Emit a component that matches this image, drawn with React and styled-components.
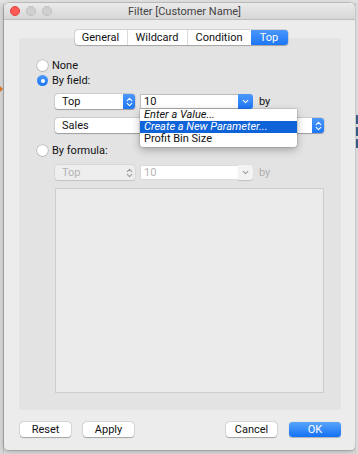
import React from "react";
import styled, { createGlobalStyle, css } from "styled-components";

const Global = createGlobalStyle`
  html, body { margin: 0; padding: 0; }
  body {
    width: 358px; height: 454px; overflow: hidden;
    font-family: Roboto, "Liberation Sans", Arial, sans-serif;
    -webkit-font-smoothing: antialiased;
  }
`;

const Desktop = styled.div`
  width: 358px;
  height: 454px;
  background: #e2e2e2;
  display: flex;
  align-items: flex-start;
  padding-top: 3px;
  box-sizing: border-box;
`;

const SideStrip = styled.div`
  width: ${(p) => p.$w}px;
  height: 451px;
  flex: none;
  display: flex;
  flex-direction: column;
  background: #dadada;
  border-${(p) => (p.$left ? "right" : "left")}: 1px solid #c9c9c9;
  box-sizing: border-box;
`;

const Spacer = styled.div`
  height: ${(p) => p.$h}px;
  flex: none;
`;

const OrangeMark = styled.div`
  width: 0; height: 0;
  border-top: 3px solid transparent;
  border-bottom: 3px solid transparent;
  border-left: 3px solid #e07a2a;
`;

const BlueBlock = styled.div`
  height: 9px;
  margin-bottom: 3px;
  background: #3a5a86;
`;

const Window = styled.div`
  width: 351px;
  height: 447px;
  flex: none;
  background: #ececec;
  border-radius: 5px 5px 4px 4px;
  box-shadow: 0 0 0 0.5px rgba(0,0,0,0.25), 0 2px 6px rgba(0,0,0,0.25);
  display: flex;
  flex-direction: column;
`;

const TitleBar = styled.div`
  height: 17px;
  flex: none;
  display: flex;
  align-items: center;
  background: linear-gradient(#ebebeb, #d6d6d6);
  border-bottom: 1px solid #bdbdbd;
  border-radius: 5px 5px 0 0;
  box-sizing: border-box;
  padding-left: 6px;
`;

const Lights = styled.div`
  display: flex;
  gap: 6px;
  flex: none;
`;

const Light = styled.span`
  width: 10px;
  height: 10px;
  border-radius: 50%;
  box-sizing: border-box;
  ${(p) =>
    p.$red
      ? css`background: #fc5b57; border: 0.5px solid #e0443e;`
      : css`background: #d0d0d0; border: 0.5px solid #c0c0c0;`}
`;

const Title = styled.div`
  flex: 1;
  text-align: center;
  font-size: 11px;
  color: #444;
  margin-right: 38px;
`;

const Content = styled.div`
  flex: 1;
  display: flex;
  flex-direction: column;
  padding: 10px 14px 13px 15px;
`;

const Tabs = styled.div`
  align-self: center;
  display: flex;
  height: 15px;
  margin-bottom: -7px;
  margin-left: 2px;
  position: relative;
  z-index: 2;
  background: #fff;
  border-radius: 3px;
  box-shadow: 0 0 0 0.5px rgba(0,0,0,0.18), 0 0.5px 1px rgba(0,0,0,0.2);
`;

const Tab = styled.div`
  width: ${(p) => p.$w}px;
  display: flex;
  align-items: center;
  justify-content: center;
  font-size: 11px;
  color: #111;
  box-sizing: border-box;
  & + & { border-left: 1px solid #dcdcdc; }
  ${(p) =>
    p.$active &&
    css`
      background: linear-gradient(#4a97fb, #1d76f5);
      color: #fff;
      border-radius: 0 3px 3px 0;
      border-left: none !important;
    `}
`;

const Panel = styled.div`
  height: 372px;
  flex: none;
  background: #e3e3e3;
  border-radius: 4px;
  display: flex;
  flex-direction: column;
  padding: 20px 0 17px 18px;
  box-sizing: border-box;
`;

const RadioRow = styled.label`
  height: 15px;
  display: flex;
  align-items: center;
  gap: 4px;
  font-size: 11px;
  color: #111;
  margin-top: ${(p) => p.$mt || 0}px;
`;

const Radio = styled.span`
  width: 11px;
  height: 11px;
  border-radius: 50%;
  box-sizing: border-box;
  display: flex;
  align-items: center;
  justify-content: center;
  flex: none;
  ${(p) =>
    p.$checked
      ? css`
          background: linear-gradient(#4c98fb, #1e76f5);
          &::after { content: ""; width: 4px; height: 4px; border-radius: 50%; background: #fff; }
        `
      : css`
          background: #fff;
          box-shadow: 0 0 0 0.5px rgba(0,0,0,0.25), 0 0.5px 1px rgba(0,0,0,0.2);
        `}
`;

const FieldRow = styled.div`
  height: 15px;
  display: flex;
  align-items: center;
  gap: 5px;
  margin-left: 18px;
  margin-top: ${(p) => p.$mt}px;
`;

const Select = styled.div`
  width: ${(p) => p.$w}px;
  height: 15px;
  display: flex;
  align-items: center;
  box-sizing: border-box;
  border-radius: 3px;
  background: ${(p) => (p.$disabled ? "#eeeeee" : "#fff")};
  box-shadow: 0 0 0 0.5px rgba(0,0,0,${(p) => (p.$disabled ? 0.08 : 0.15)}), 0 0.5px 1px rgba(0,0,0,${(p) => (p.$disabled ? 0.1 : 0.25)});
  font-size: 11px;
  color: ${(p) => (p.$disabled ? "#b3b3b3" : "#111")};
  padding-left: 7px;
  flex: none;
`;

const SelectText = styled.span`
  flex: 1;
`;

const Stepper = styled.span`
  width: 12px;
  height: 15px;
  flex: none;
  display: flex;
  align-items: center;
  justify-content: center;
  border-radius: 0 3px 3px 0;
  ${(p) =>
    p.$disabled
      ? css`background: transparent; color: #9a9a9a;`
      : css`background: linear-gradient(#4c98fb, #1e76f5); color: #fff;`}
`;

const Combo = styled.div`
  width: 113px;
  height: 15px;
  flex: none;
  display: flex;
  position: relative;
  font-size: 11px;
  color: ${(p) => (p.$disabled ? "#b5b5b5" : "#111")};
`;

const ComboInput = styled.div`
  flex: 1;
  background: #fff;
  border: 0.5px solid ${(p) => (p.$disabled ? "#dadada" : "#bdbdbd")};
  border-right: none;
  display: flex;
  align-items: center;
  padding-left: 3px;
  box-sizing: border-box;
`;

const ComboButton = styled.span`
  width: 15px;
  flex: none;
  display: flex;
  align-items: center;
  justify-content: center;
  border-radius: 0 3px 3px 0;
  ${(p) =>
    p.$disabled
      ? css`background: #f3f3f3; color: #9a9a9a; box-shadow: 0 0.5px 1px rgba(0,0,0,0.15);`
      : css`background: linear-gradient(#4c98fb, #1e76f5); color: #fff;`}
`;

const ByLabel = styled.span`
  font-size: 11px;
  margin-left: 1px;
  color: ${(p) => (p.$disabled ? "#b0b0b0" : "#111")};
`;

const Menu = styled.div`
  position: absolute;
  top: 100%;
  left: 0;
  width: 157px;
  z-index: 5;
  background: #fff;
  border-radius: 0 0 3px 3px;
  box-shadow: 0 0 0 0.5px rgba(0,0,0,0.2), 0 3px 8px rgba(0,0,0,0.28);
  padding: 0 0 1px;
`;

const MenuItem = styled.div`
  height: 12.2px;
  line-height: 12px;
  padding-left: 4px;
  font-size: 11px;
  color: ${(p) => (p.$hl ? "#fff" : "#111")};
  background: ${(p) => (p.$hl ? "#0f63d8" : "transparent")};
  font-style: ${(p) => (p.$italic ? "italic" : "normal")};
  white-space: nowrap;
`;

const FormulaBox = styled.div`
  width: 269px;
  height: 205px;
  margin: 8px 0 0 18px;
  background: #ebebeb;
  border: 1px solid #cdcdcd;
  box-sizing: border-box;
`;

const ButtonBar = styled.div`
  display: flex;
  align-items: center;
  gap: 12px;
  margin-top: 12px;
  padding-left: 1px;
`;

const Grow = styled.div`
  flex: 1;
`;

const Button = styled.button`
  width: 51px;
  height: 15px;
  padding: 0;
  border: none;
  border-radius: 3.5px;
  font-family: inherit;
  font-size: 11px;
  ${(p) =>
    p.$primary
      ? css`
          width: 52px;
          background: linear-gradient(#5aa5fb, #1471f5);
          color: #fff;
          box-shadow: 0 0.5px 1px rgba(0,0,0,0.25);
        `
      : css`
          background: #fff;
          color: #111;
          box-shadow: 0 0 0 0.5px rgba(0,0,0,0.15), 0 0.5px 1px rgba(0,0,0,0.25);
        `}
`;

const UpDown = () => (
  <svg width="7" height="10" viewBox="0 0 7 10" fill="none" stroke="currentColor" strokeWidth="1.1" strokeLinecap="round" strokeLinejoin="round">
    <path d="M1.2 3.6 L3.5 1.4 L5.8 3.6" />
    <path d="M1.2 6.4 L3.5 8.6 L5.8 6.4" />
  </svg>
);

const Down = () => (
  <svg width="7" height="5" viewBox="0 0 7 5" fill="none" stroke="currentColor" strokeWidth="1.1" strokeLinecap="round" strokeLinejoin="round">
    <path d="M1.2 1.3 L3.5 3.6 L5.8 1.3" />
  </svg>
);

export default function App() {
  return (
    <>
      <Global />
      <Desktop>
        <SideStrip $w={4} $left>
          <Spacer $h={83} />
          <OrangeMark />
        </SideStrip>
        <Window>
          <TitleBar>
            <Lights>
              <Light $red />
              <Light />
              <Light />
            </Lights>
            <Title>Filter [Customer Name]</Title>
          </TitleBar>
          <Content>
            <Tabs>
              <Tab $w={52}>General</Tab>
              <Tab $w={60}>Wildcard</Tab>
              <Tab $w={64}>Condition</Tab>
              <Tab $w={37} $active>Top</Tab>
            </Tabs>
            <Panel>
              <RadioRow>
                <Radio />
                None
              </RadioRow>
              <RadioRow>
                <Radio $checked />
                By field:
              </RadioRow>
              <FieldRow $mt={6}>
                <Select $w={80}>
                  <SelectText>Top</SelectText>
                  <Stepper><UpDown /></Stepper>
                </Select>
                <Combo>
                  <ComboInput>10</ComboInput>
                  <ComboButton><Down /></ComboButton>
                  <Menu>
                    <MenuItem $italic>Enter a Value...</MenuItem>
                    <MenuItem $italic $hl>Create a New Parameter...</MenuItem>
                    <MenuItem>Profit Bin Size</MenuItem>
                  </Menu>
                </Combo>
                <ByLabel>by</ByLabel>
              </FieldRow>
              <FieldRow $mt={9}>
                <Select $w={269}>
                  <SelectText>Sales</SelectText>
                  <Stepper><UpDown /></Stepper>
                </Select>
              </FieldRow>
              <RadioRow $mt={10}>
                <Radio />
                By formula:
              </RadioRow>
              <FieldRow $mt={7}>
                <Select $w={80} $disabled>
                  <SelectText>Top</SelectText>
                  <Stepper $disabled><UpDown /></Stepper>
                </Select>
                <Combo $disabled>
                  <ComboInput $disabled>10</ComboInput>
                  <ComboButton $disabled><Down /></ComboButton>
                </Combo>
                <ByLabel $disabled>by</ByLabel>
              </FieldRow>
              <FormulaBox />
            </Panel>
            <ButtonBar>
              <Button>Reset</Button>
              <Button>Apply</Button>
              <Grow />
              <Button>Cancel</Button>
              <Button $primary>OK</Button>
            </ButtonBar>
          </Content>
        </Window>
        <SideStrip $w={3}>
          <Spacer $h={112} />
          <BlueBlock />
          <BlueBlock />
          <BlueBlock />
        </SideStrip>
      </Desktop>
    </>
  );
}
